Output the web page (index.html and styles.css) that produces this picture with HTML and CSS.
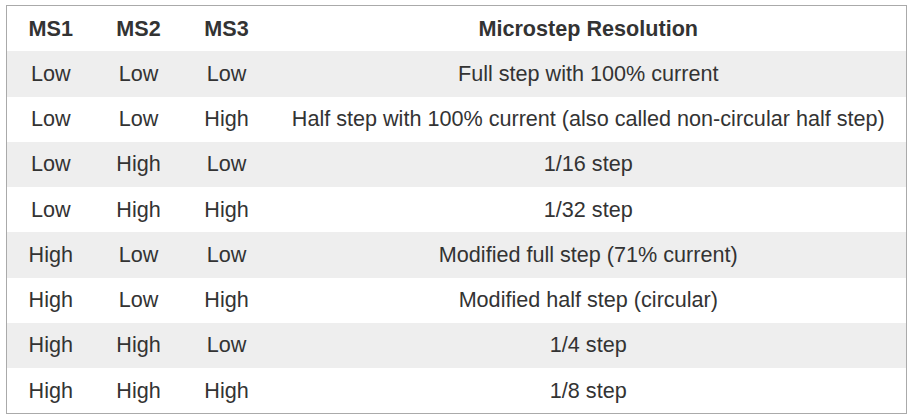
FILE: index.html
```html
<!DOCTYPE html>
<html>
<head>
<meta charset="utf-8">
<link rel="stylesheet" href="styles.css">
</head>
<body>
<table class="ms-table">
  <colgroup>
    <col class="col-ms">
    <col class="col-ms">
    <col class="col-ms">
    <col class="col-res">
  </colgroup>
  <thead>
    <tr><th>MS1</th><th>MS2</th><th>MS3</th><th>Microstep Resolution</th></tr>
  </thead>
  <tbody>
    <tr><td>Low</td><td>Low</td><td>Low</td><td>Full step with 100% current</td></tr>
    <tr><td>Low</td><td>Low</td><td>High</td><td>Half step with 100% current (also called non-circular half step)</td></tr>
    <tr><td>Low</td><td>High</td><td>Low</td><td>1/16 step</td></tr>
    <tr><td>Low</td><td>High</td><td>High</td><td>1/32 step</td></tr>
    <tr><td>High</td><td>Low</td><td>Low</td><td>Modified full step (71% current)</td></tr>
    <tr><td>High</td><td>Low</td><td>High</td><td>Modified half step (circular)</td></tr>
    <tr><td>High</td><td>High</td><td>Low</td><td>1/4 step</td></tr>
    <tr><td>High</td><td>High</td><td>High</td><td>1/8 step</td></tr>
  </tbody>
</table>
</body>
</html>
```
FILE: styles.css
```css
html, body {
  margin: 0;
  padding: 0;
  background: #ffffff;
}
body {
  padding: 5px 0 0 6px;
  font-family: "Liberation Sans", Arial, sans-serif;
  color: #333333;
}
.ms-table {
  width: 901px;
  border: 1px solid #aaaaaa;
  border-collapse: collapse;
  table-layout: fixed;
  font-size: 21.6px;
}
.col-ms {
  width: 88px;
}
.ms-table th,
.ms-table td {
  height: 45.25px;
  padding: 0;
  text-align: center;
  vertical-align: middle;
  white-space: nowrap;
}
.ms-table th {
  font-weight: bold;
}
.ms-table tbody tr:nth-child(odd) {
  background: #eeeeee;
}
```
